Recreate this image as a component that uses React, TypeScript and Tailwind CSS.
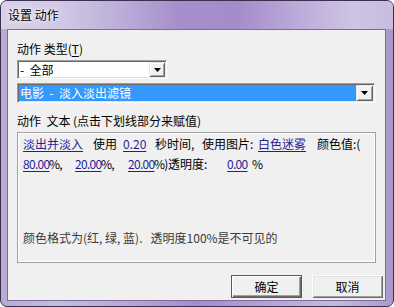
import React from "react";

function Tri() {
  return (
    <svg width="7" height="4" viewBox="0 0 7 4">
      <polygon points="0,0 7,0 3.5,4" fill="#000" />
    </svg>
  );
}

function ArrowBtn({ w }: { w: string }) {
  return (
    <div
      className={`${w} h-full flex items-center justify-center bg-[#f0f0f0] shadow-[inset_1px_1px_0_#e3e3e3,inset_-1px_-1px_0_#696969,inset_2px_2px_0_#ffffff,inset_-2px_-2px_0_#a0a0a0]`}
    >
      <Tri />
    </div>
  );
}

function L({ children }: { children: React.ReactNode }) {
  return <span className="text-[#1f1f99] underline underline-offset-[2px] decoration-1">{children}</span>;
}

export default function App() {
  return (
    <div className="w-[394px] h-[307px] bg-white">
      <div className="w-[394px] h-[307px] rounded-[7px] border border-[#3a3050] flex flex-col overflow-hidden bg-[linear-gradient(90deg,#b9aad6_0%,#c7bbdf_15%,#b5a3d5_35%,#a48ccb_50%,#b6a5d6_70%,#c6b9de_85%,#a999cb_100%)] font-['Noto_Sans_CJK_SC','Noto_Sans',sans-serif] text-[12px] text-black">
        <div className="h-[28px] pl-[7px] flex items-center bg-[linear-gradient(90deg,#d9d1e8_0%,#d2c8e5_15%,#bcaed9_30%,#a88fcc_45%,#a58bca_60%,#bba9d9_75%,#cfc4e4_90%,#c8bcdf_100%)]">
          <span className="leading-[16px] [text-shadow:0_0_6px_#ffffff,0_0_3px_#ffffff]">设置 动作</span>
        </div>
        <div className="flex-1 ml-[6px] mr-[7px] mb-[5px] border border-[#7b6c98] bg-[#f0f0f0] flex flex-col pl-[9px]">
          <div className="mt-[11px] h-[16px] leading-[16px]">
            动作 类型(<span className="underline underline-offset-[2px]">T</span>)
          </div>
          <div className="mt-[3px] w-[150px] h-[19px] flex p-px border-t border-l border-t-[#a0a0a0] border-l-[#a0a0a0] border-b border-r border-b-white border-r-white shadow-[inset_1px_1px_0_#696969,inset_-1px_-1px_0_#e3e3e3]">
            <div className="flex-1 bg-white pl-[1px] leading-[17px] flex items-center whitespace-pre">-  全部</div>
            <ArrowBtn w="w-[16px]" />
          </div>
          <div className="mt-[4px] w-[358px] h-[20px] flex p-px border-t border-l border-t-[#a0a0a0] border-l-[#a0a0a0] border-b border-r border-b-white border-r-white shadow-[inset_1px_1px_0_#696969,inset_-1px_-1px_0_#e3e3e3]">
            <div className="flex-1 bg-[#3399ff] text-white pl-[1px] flex items-center whitespace-pre">电影  -  淡入淡出滤镜</div>
            <ArrowBtn w="w-[17px]" />
          </div>
          <div className="mt-[10px] h-[16px] leading-[16px] whitespace-pre">动作  文本 (点击下划线部分来赋值)</div>
          <div className="mt-[3px] w-[359px] h-[131px] border border-[#a0a0a0] shadow-[inset_0_0_0_1px_#ffffff] flex flex-col pl-[5px] pt-[1px] pb-[14px]">
            <div className="h-[20px] leading-[20px] whitespace-nowrap">
              <span className="inline-block w-[70px]"><L>淡出并淡入</L></span>
              <span className="inline-block w-[30px]">使用</span>
              <span className="inline-block w-[32px]"><L>0.20</L></span>
              <span className="inline-block w-[47px]">秒时间,</span>
              <span className="inline-block w-[56px]">使用图片:</span>
              <span className="inline-block w-[59px]"><L>白色迷雾</L></span>
              <span className="inline-block">颜色值:(</span>
            </div>
            <div className="h-[20px] leading-[20px] whitespace-nowrap tracking-[-0.7px]">
              <span className="inline-block w-[26px]"><L>80.00</L></span>
              <span className="inline-block w-[26px]">%,</span>
              <span className="inline-block w-[26px]"><L>20.00</L></span>
              <span className="inline-block w-[27px]">%,</span>
              <span className="inline-block w-[26px]"><L>20.00</L></span>
              <span className="inline-block w-[14px]">%)</span>
              <span className="inline-block w-[59px] tracking-normal">透明度:</span>
              <span className="inline-block w-[25px]"><L>0.00</L></span>
              <span className="inline-block">%</span>
            </div>
            <div className="mt-auto h-[20px] leading-[20px] text-[#3a3a3a] whitespace-pre">
              颜色格式为(红, 绿, 蓝).   透明度100%是不可见的
            </div>
          </div>
          <div className="mt-[12px] flex justify-end gap-[10px] pr-[2px]">
            <button className="w-[71px] h-[23px] bg-[#f0f0f0] border border-[#5a5a5a] shadow-[inset_1px_1px_0_#ffffff,inset_-1px_-1px_0_#6a6a6a,inset_-2px_-2px_0_#a0a0a0] flex items-center justify-center leading-[16px]">
              确定
            </button>
            <button className="w-[71px] h-[23px] bg-[#f0f0f0] shadow-[inset_1px_1px_0_#ffffff,inset_-1px_-1px_0_#696969,inset_2px_2px_0_#e3e3e3,inset_-2px_-2px_0_#a0a0a0] flex items-center justify-center leading-[16px]">
              取消
            </button>
          </div>
        </div>
      </div>
    </div>
  );
}
